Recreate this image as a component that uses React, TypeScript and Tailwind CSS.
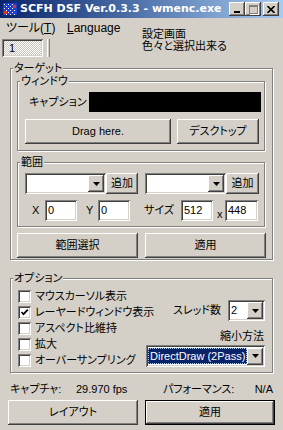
import React from "react";

const raised =
  "bg-[#d4d0c8] shadow-[inset_-1px_-1px_#404040,inset_1px_1px_#ffffff,inset_-2px_-2px_#808080,inset_2px_2px_#d4d0c8]";
const sunken =
  "shadow-[inset_1px_1px_#808080,inset_-1px_-1px_#ffffff,inset_2px_2px_#404040,inset_-2px_-2px_#d4d0c8]";
const jp = "[font-feature-settings:'palt']";

function Group({
  label,
  className,
  children,
}: {
  label: string;
  className: string;
  children?: React.ReactNode;
}) {
  return (
    <div
      className={
        "relative border border-[#808080] shadow-[inset_1px_1px_#ffffff,1px_1px_#ffffff] " +
        className
      }
    >
      <span className="absolute left-[2px] top-[-7px] whitespace-nowrap bg-[#d4d0c8] px-[1px] text-[11px] leading-[12px]">
        {label}
      </span>
      {children}
    </div>
  );
}

function Arrow() {
  return (
    <div className={"flex h-[17px] w-[16px] shrink-0 items-center justify-center " + raised}>
      <svg width="7" height="4" viewBox="0 0 7 4">
        <polygon points="0,0 7,0 3.5,4" fill="#000" />
      </svg>
    </div>
  );
}

function Combo({ className, children }: { className: string; children?: React.ReactNode }) {
  return (
    <div className={"flex shrink-0 items-center bg-white p-[2px] " + sunken + " " + className}>
      <div className="flex h-full min-w-0 flex-1 items-center">{children}</div>
      <Arrow />
    </div>
  );
}

function Btn({ className, children }: { className: string; children?: React.ReactNode }) {
  return (
    <div className={"flex shrink-0 items-center justify-center whitespace-nowrap text-[11px] " + raised + " " + className}>
      {children}
    </div>
  );
}

function Input({ className, value }: { className: string; value: string }) {
  return (
    <div className={"flex h-[21px] shrink-0 items-center bg-white pl-[3px] text-[11px] " + sunken + " " + className}>
      {value}
    </div>
  );
}

function Check({ checked, label }: { checked?: boolean; label: string }) {
  return (
    <div className="flex h-[16px] items-start">
      <div className={"h-[13px] w-[13px] shrink-0 bg-white " + sunken}>
        {checked && (
          <svg width="13" height="13" viewBox="0 0 13 13">
            <path d="M3.5 6 L5.5 8.2 L9.8 3.6" stroke="#000" strokeWidth="1.7" fill="none" />
          </svg>
        )}
      </div>
      <span className="ml-[4px] whitespace-nowrap text-[11px] leading-[13px]">{label}</span>
    </div>
  );
}

export default function App() {
  return (
    <div
      className={
        "flex h-[430px] w-[283px] flex-col overflow-hidden bg-[#d4d0c8] font-['Liberation_Sans','Noto_Sans_CJK_JP',sans-serif] text-[11px] text-black " +
        jp
      }
    >
      {/* title bar */}
      <div className="flex h-[18px] shrink-0 items-center bg-gradient-to-r from-[#0a246a] to-[#a6caf0]">
        <svg className="ml-[2px]" width="16" height="16" viewBox="0 0 16 16">
          <rect x="1" y="2" width="14" height="12" fill="#1c3fd0" />
          {[0, 1, 2, 3, 4, 5].map((r) =>
            [0, 1, 2, 3, 4, 5].map((c) =>
              (r + c) % 2 === 0 ? (
                <rect key={r + "-" + c} x={2 + c * 2} y={3 + r * 2} width="1" height="1" fill="#ffffff" />
              ) : null
            )
          )}
          <rect x="2" y="10" width="3" height="3" fill="#e03030" />
          <rect x="11" y="4" width="3" height="3" fill="#e03030" />
        </svg>
        <span className="ml-[2px] whitespace-nowrap font-['DejaVu_Sans'] text-[11px] font-bold leading-[18px] text-white">
          SCFH DSF Ver.0.3.3 - wmenc.exe
        </span>
        <div className="ml-auto mr-[4px] flex">
          <div className={"flex h-[14px] w-[16px] items-end justify-center pb-[3px] " + raised}>
            <div className="h-[2px] w-[6px] bg-black" />
          </div>
          <div className={"flex h-[14px] w-[16px] items-center justify-center " + raised}>
            <div className="h-[9px] w-[9px] border border-t-2 border-[#808080] shadow-[1px_1px_#ffffff]" />
          </div>
          <div className={"ml-[2px] flex h-[14px] w-[16px] items-center justify-center " + raised}>
            <svg width="8" height="7" viewBox="0 0 8 7">
              <path d="M0.5 0 L7.5 7 M7.5 0 L0.5 7" stroke="#000" strokeWidth="1.6" />
            </svg>
          </div>
        </div>
      </div>

      {/* menu + tab + note */}
      <div className="flex h-[50px] shrink-0">
        <div className="flex w-[140px] shrink-0 flex-col">
          <div className="flex h-[20px] items-center leading-[12px]">
            <span className="w-[67px] whitespace-nowrap pl-[6px] text-[12px]">
              ツール(<span className="underline">T</span>)
            </span>
            <span className="text-[12px]">
              <span className="underline">L</span>anguage
            </span>
          </div>
          <div className="mt-[1px] flex">
            <div
              className={
                "ml-[2px] flex h-[18px] w-[41px] items-center bg-[image:repeating-conic-gradient(#ffffff_0_25%,#c8c4bc_0_50%)] bg-[length:2px_2px] pl-[7px] " +
                sunken
              }
            >
              1
            </div>
            <div className="ml-[4px] h-[18px] w-[3px] border-l border-r border-l-white border-r-[#808080]" />
          </div>
        </div>
        <div className="ml-[2px] pt-[10px] text-[11px] leading-[12px]">
          <div className="whitespace-nowrap">設定画面</div>
          <div className="whitespace-nowrap">色々と選択出来る</div>
        </div>
      </div>

      {/* target group */}
      <Group label="ターゲット" className="ml-[10px] h-[192px] w-[263px] shrink-0 pl-[6px] pt-[12px]">
        <Group label="ウィンドウ" className="h-[70px] w-[248px]">
          <div className="mt-[10px] flex items-center pl-[11px]">
            <span className="w-[60px] shrink-0 whitespace-nowrap">キャプション</span>
            <div className="h-[20px] w-[172px] shrink-0 bg-black" />
          </div>
          <div className="mt-[7px] flex gap-[6px] pl-[7px]">
            <Btn className="h-[25px] w-[146px]">Drag here.</Btn>
            <Btn className="h-[25px] w-[82px]">デスクトップ</Btn>
          </div>
        </Group>
        <Group label="範囲" className="mt-[11px] h-[65px] w-[248px]">
          <div className="mt-[10px] flex pl-[7px]">
            <Combo className="h-[21px] w-[81px]" />
            <Btn className="h-[21px] w-[32px]">追加</Btn>
            <Combo className="ml-[7px] h-[21px] w-[81px]" />
            <Btn className="h-[21px] w-[33px]">追加</Btn>
          </div>
          <div className="mt-[6px] flex items-center pl-[14px]">
            <span className="w-[13px] shrink-0">X</span>
            <Input className="w-[32px]" value="0" />
            <span className="w-[21px] shrink-0 pl-[9px]">Y</span>
            <Input className="w-[32px]" value="0" />
            <span className="w-[51px] shrink-0 whitespace-nowrap pl-[14px]">サイズ</span>
            <Input className="w-[32px]" value="512" />
            <span className="w-[12px] shrink-0 self-end pl-[4px] leading-[14px]">x</span>
            <Input className="w-[33px]" value="448" />
          </div>
        </Group>
        <div className="mt-[6px] flex gap-[7px]">
          <Btn className="h-[25px] w-[121px]">範囲選択</Btn>
          <Btn className="h-[25px] w-[121px]">適用</Btn>
        </div>
      </Group>

      {/* options */}
      <Group label="オプション" className="ml-[10px] mt-[18px] flex h-[95px] w-[263px] shrink-0">
        <div className="flex w-[120px] shrink-0 flex-col pl-[7px] pt-[11px]">
          <Check label="マウスカーソル表示" />
          <Check checked label="レーヤードウィンドウ表示" />
          <Check label="アスペクト比維持" />
          <Check label="拡大" />
          <Check label="オーバーサンプリング" />
        </div>
        <div className="ml-auto flex shrink-0 flex-col items-end pr-[7px] pt-[21px]">
          <div className="flex items-center">
            <span className="mr-[7px] whitespace-nowrap">スレッド数</span>
            <Combo className="h-[21px] w-[37px]">
              <span className="pl-[1px]">2</span>
            </Combo>
          </div>
          <div className="mt-[9px] whitespace-nowrap pr-[1px] leading-[12px]">縮小方法</div>
          <Combo className="mt-[3px] h-[22px] w-[119px]">
            <div className="flex h-[16px] w-full items-center whitespace-nowrap border border-dotted border-[#a6caf0] bg-[#0a246a] pl-[1px] text-white">
              DirectDraw (2Pass)
            </div>
          </Combo>
        </div>
      </Group>

      {/* status */}
      <div className="mt-[10px] flex h-[12px] shrink-0 items-center whitespace-nowrap pl-[10px] pr-[10px] leading-[12px]">
        <span className="w-[66px] shrink-0">キャプチャ:</span>
        <span className="w-[87px] shrink-0">29.970 fps</span>
        <span>パフォーマンス:</span>
        <span className="ml-auto">N/A</span>
      </div>

      {/* bottom buttons */}
      <div className="mt-[5px] flex shrink-0 gap-[7px] pl-[8px]">
        <Btn className="h-[25px] w-[130px]">レイアウト</Btn>
        <div className="h-[25px] w-[130px] shrink-0 border border-black">
          <Btn className="h-full w-full">適用</Btn>
        </div>
      </div>
    </div>
  );
}
